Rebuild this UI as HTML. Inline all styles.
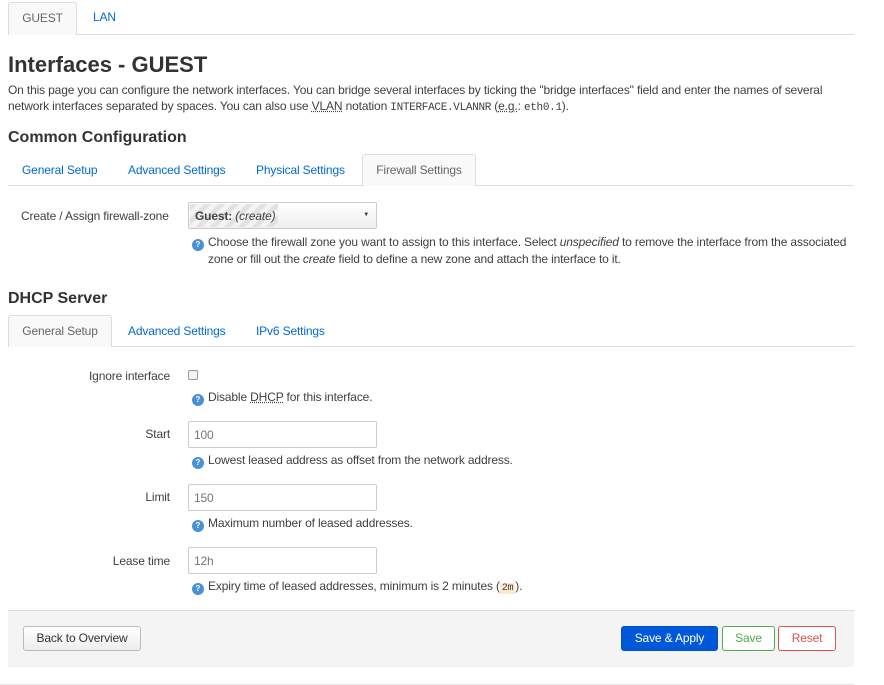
<!DOCTYPE html>
<html><head><meta charset="utf-8">
<style>
*{box-sizing:border-box;margin:0;padding:0}
body{width:884px;height:685px;background:#fff;font-family:"Liberation Sans",Arial,sans-serif;font-size:12px;letter-spacing:-0.15px;color:#404040;position:relative;overflow:hidden}
.a{position:absolute;white-space:nowrap}
.lnk{color:#0069d6}
.line{position:absolute;height:1px;background:#ddd}
.tab{position:absolute;border:1px solid #ddd;border-bottom:none;background:#f9f9f9;border-radius:3px 3px 0 0;color:#666;text-align:center}
.inp{position:absolute;border:1px solid #ccc;border-radius:2px;background:#fff;width:189px;height:27px;padding:6px 0 0 5px;color:#777;font-size:12px}
.help{position:absolute;white-space:nowrap;font-size:12px;color:#404040}
.help i.q{display:inline-block;width:12px;height:12px;border-radius:50%;background:#4a90d9;color:#fff;font-size:8px;line-height:12px;text-align:center;font-style:normal;vertical-align:-1px;margin-right:4px;font-weight:bold;letter-spacing:0}
.lbl{position:absolute;text-align:right;white-space:nowrap}
abbr{text-decoration:underline dotted}
code{font-family:"Liberation Mono",monospace;font-size:11px;letter-spacing:-0.3px}
.btn{position:absolute;height:25px;border-radius:3px;text-align:center;line-height:23px;font-size:12px}
</style></head><body>
<div class="tab" style="left:8px;top:2px;width:69px;height:33px;line-height:31px">GUEST</div>
<div class="a lnk" style="left:93px;top:10px">LAN</div>
<div class="line" style="left:77px;top:34px;width:777px"></div>

<div class="a" style="left:8px;top:52px;font-size:22px;font-weight:bold;color:#333;letter-spacing:0">Interfaces - GUEST</div>
<div class="a" style="left:8px;top:82px;line-height:16px">On this page you can configure the network interfaces. You can bridge several interfaces by ticking the "bridge interfaces" field and enter the names of several<br>network interfaces separated by spaces. You can also use <abbr>VLAN</abbr> notation <code>INTERFACE.VLANNR</code> (<abbr>e.g.</abbr>: <code>eth0.1</code>).</div>

<div class="a" style="left:8px;top:129px;font-size:16px;font-weight:bold;color:#333;letter-spacing:0">Common Configuration</div>
<div class="a lnk" style="left:22px;top:163px">General Setup</div>
<div class="a lnk" style="left:128px;top:163px">Advanced Settings</div>
<div class="a lnk" style="left:256px;top:163px">Physical Settings</div>
<div class="tab" style="left:362px;top:154px;width:114px;height:32px;line-height:30px">Firewall Settings</div>
<div class="line" style="left:8px;top:185px;width:354px"></div>
<div class="line" style="left:476px;top:185px;width:378px"></div>

<div class="lbl" style="left:21px;top:209px">Create / Assign firewall-zone</div>
<div class="a" style="left:188px;top:202px;width:189px;height:27px;border:1px solid #ccc;border-radius:2px;background:linear-gradient(#fff,#eee)">
<div style="position:absolute;left:1px;top:1px;width:88px;height:23px;background:repeating-linear-gradient(135deg,#e2e2e2 0 5px,#f4f4f4 5px 10px)"></div>
<div style="position:absolute;left:6px;top:6px;color:#444"><b>Guest:</b> <i>(create)</i></div>
<div style="position:absolute;right:7px;top:9px;font-size:6px;color:#333">▼</div>
</div>
<div class="help" style="left:192px;top:234px;line-height:17px"><i class="q">?</i>Choose the firewall zone you want to assign to this interface. Select <i>unspecified</i> to remove the interface from the associated<br><span style="margin-left:16px">zone or fill out the <i>create</i> field to define a new zone and attach the interface to it.</span></div>

<div class="a" style="left:8px;top:290px;font-size:16px;font-weight:bold;color:#333;letter-spacing:0">DHCP Server</div>
<div class="tab" style="left:8px;top:315px;width:104px;height:32px;line-height:30px">General Setup</div>
<div class="a lnk" style="left:128px;top:324px">Advanced Settings</div>
<div class="a lnk" style="left:256px;top:324px">IPv6 Settings</div>
<div class="line" style="left:112px;top:346px;width:742px"></div>

<div class="lbl" style="right:714px;top:369px">Ignore interface</div>
<div class="a" style="left:188px;top:370px;width:10px;height:10px;border:1px solid #999;border-radius:2px;background:#f4f4f4"></div>
<div class="help" style="left:192px;top:390px"><i class="q">?</i>Disable <abbr>DHCP</abbr> for this interface.</div>

<div class="lbl" style="right:714px;top:427px">Start</div>
<div class="inp" style="left:188px;top:421px">100</div>
<div class="help" style="left:192px;top:453px"><i class="q">?</i>Lowest leased address as offset from the network address.</div>

<div class="lbl" style="right:714px;top:490px">Limit</div>
<div class="inp" style="left:188px;top:484px">150</div>
<div class="help" style="left:192px;top:516px"><i class="q">?</i>Maximum number of leased addresses.</div>

<div class="lbl" style="right:714px;top:554px">Lease time</div>
<div class="inp" style="left:188px;top:547px">12h</div>
<div class="help" style="left:192px;top:579px"><i class="q">?</i>Expiry time of leased addresses, minimum is 2 minutes (<code style="background:#fee9cc;padding:0 2px;font-size:10px">2m</code>).</div>

<div class="a" style="left:8px;top:610px;width:846px;height:57px;background:#f4f4f4;border-top:1px solid #ddd"></div>
<div class="btn" style="left:23px;top:626px;width:118px;border:1px solid #bbb;background:linear-gradient(#fff,#eee);color:#333">Back to Overview</div>
<div class="btn" style="left:621px;top:626px;width:97px;background:#0058d8;border:1px solid #0050c8;color:#fff">Save &amp; Apply</div>
<div class="btn" style="left:722px;top:626px;width:53px;border:1px solid #4cae4c;background:#fff;color:#4cae4c">Save</div>
<div class="btn" style="left:778px;top:626px;width:58px;border:1px solid #d9534f;background:#fff;color:#d9534f">Reset</div>

<div class="line" style="left:0;top:684px;width:854px;background:#e6e6e6"></div>
</body></html>
